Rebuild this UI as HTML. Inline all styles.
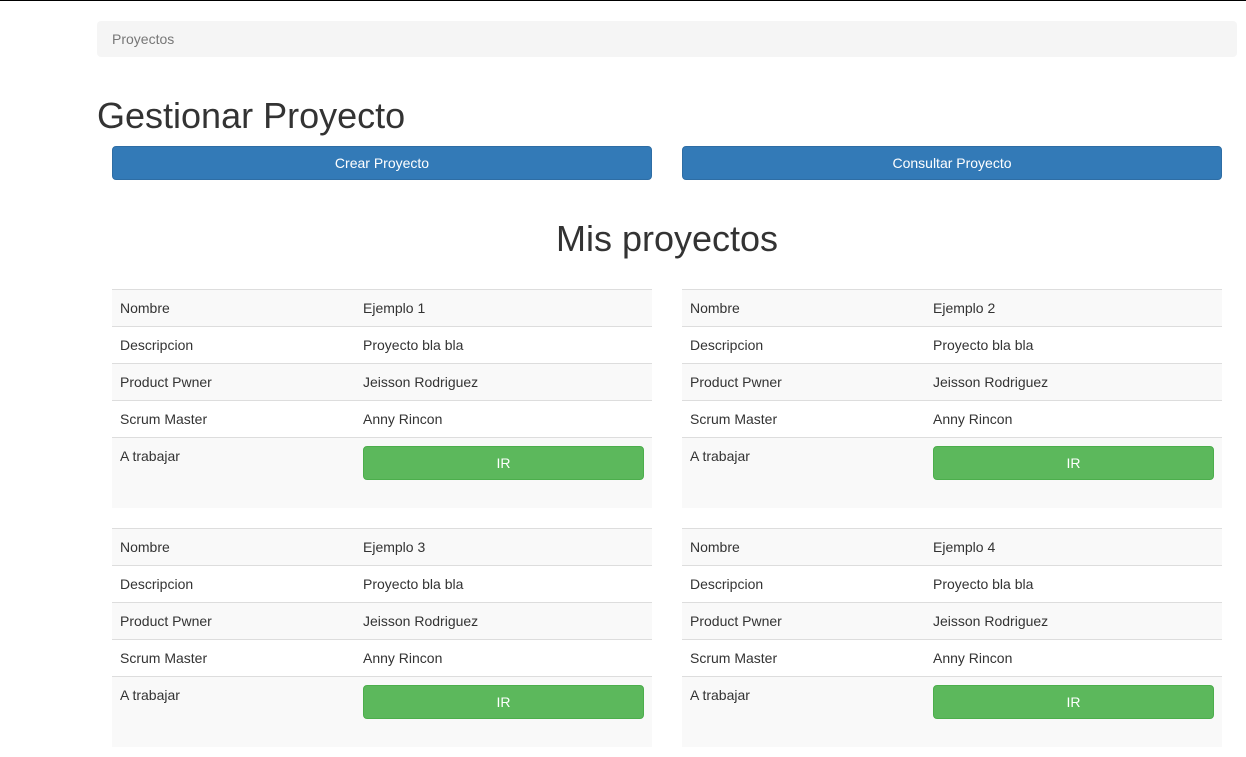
<!DOCTYPE html>
<html><head><style>
body{margin:0;width:1246px;height:757px;background:#fff;font-family:"Liberation Sans",Arial,sans-serif;color:#333;font-size:14px;position:relative;overflow:hidden}
.top{position:absolute;left:0;top:0;width:1246px;height:1px;background:#000}
.bc{position:absolute;left:97px;top:21px;width:1140px;height:36px;background:#f5f5f5;border-radius:4px;color:#777;line-height:36px;box-sizing:border-box;padding-left:15px}
h1{position:absolute;left:97px;top:96px;margin:0;font-size:36px;font-weight:normal;line-height:40px}
.btn{position:absolute;height:34px;border-radius:4px;color:#fff;text-align:center;line-height:32px;box-sizing:border-box}
.blue{background:#337ab7;border:1px solid #2e6da4}
.green{background:#5cb85c;border:1px solid #4cae4c}
h2{position:absolute;left:0;width:1334px;text-align:center;top:219px;margin:0;font-size:36px;font-weight:normal;line-height:40px}
.t{position:absolute;width:540px;border-top:1px solid #ddd}
.r{height:36px;border-bottom:1px solid #ddd;position:relative;line-height:36px}
.r.s{background:#f9f9f9}
.r span{position:absolute;left:8px}
.r span+span{left:251px}
.last{height:70px;background:#f9f9f9;position:relative}
.last span{position:absolute;left:8px;top:10px}
</style></head><body>
<div class="top"></div>
<div class="bc">Proyectos</div>
<h1>Gestionar Proyecto</h1>
<div class="btn blue" style="left:112px;top:146px;width:540px">Crear Proyecto</div>
<div class="btn blue" style="left:682px;top:146px;width:540px">Consultar Proyecto</div>
<h2>Mis proyectos</h2>

<div class="t" style="left:112px;top:289px">
<div class="r s"><span>Nombre</span><span>Ejemplo 1</span></div>
<div class="r"><span>Descripcion</span><span>Proyecto bla bla</span></div>
<div class="r s"><span>Product Pwner</span><span>Jeisson Rodriguez</span></div>
<div class="r"><span>Scrum Master</span><span>Anny Rincon</span></div>
<div class="last"><span>A trabajar</span><div class="btn green" style="left:251px;top:8px;width:281px">IR</div></div>
</div>
<div class="t" style="left:682px;top:289px">
<div class="r s"><span>Nombre</span><span>Ejemplo 2</span></div>
<div class="r"><span>Descripcion</span><span>Proyecto bla bla</span></div>
<div class="r s"><span>Product Pwner</span><span>Jeisson Rodriguez</span></div>
<div class="r"><span>Scrum Master</span><span>Anny Rincon</span></div>
<div class="last"><span>A trabajar</span><div class="btn green" style="left:251px;top:8px;width:281px">IR</div></div>
</div>
<div class="t" style="left:112px;top:528px">
<div class="r s"><span>Nombre</span><span>Ejemplo 3</span></div>
<div class="r"><span>Descripcion</span><span>Proyecto bla bla</span></div>
<div class="r s"><span>Product Pwner</span><span>Jeisson Rodriguez</span></div>
<div class="r"><span>Scrum Master</span><span>Anny Rincon</span></div>
<div class="last"><span>A trabajar</span><div class="btn green" style="left:251px;top:8px;width:281px">IR</div></div>
</div>
<div class="t" style="left:682px;top:528px">
<div class="r s"><span>Nombre</span><span>Ejemplo 4</span></div>
<div class="r"><span>Descripcion</span><span>Proyecto bla bla</span></div>
<div class="r s"><span>Product Pwner</span><span>Jeisson Rodriguez</span></div>
<div class="r"><span>Scrum Master</span><span>Anny Rincon</span></div>
<div class="last"><span>A trabajar</span><div class="btn green" style="left:251px;top:8px;width:281px">IR</div></div>
</div>
</body></html>
